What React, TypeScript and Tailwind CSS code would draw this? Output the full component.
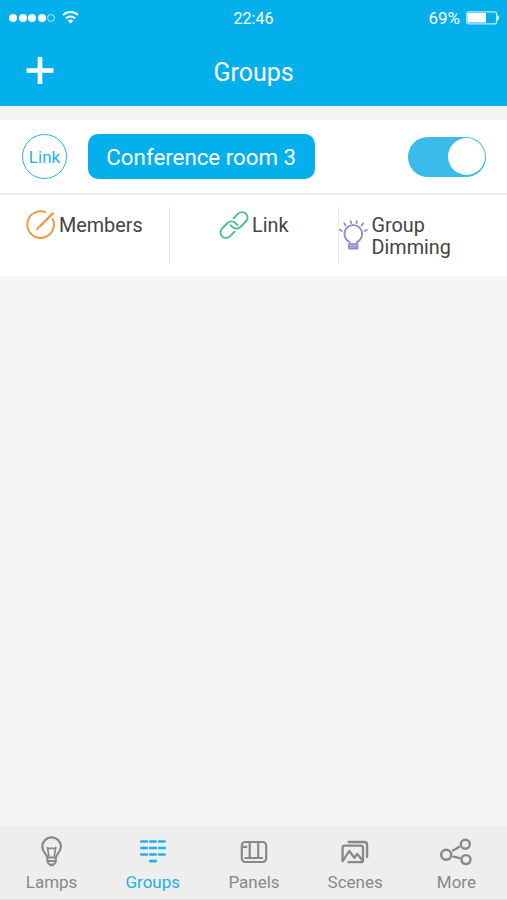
import { ReactNode, useState } from "react";
import clsx from "clsx";

function LampIcon() {
  return (
    <svg width="24" height="32" viewBox="0 0 24 32" fill="none" stroke="currentColor" strokeWidth="2.2" strokeLinejoin="round">
      <path d="M7.2 21.5C7.2 18.500 2.300 16 2.300 10.700a9.300 9.300 0 0 1 18.600 0c0 5.300-4.900 7.800-4.900 10.800z" />
      <path d="M9 20.500 7.400 11.600l2.300 1.200 1.900-.8 1.900.8 2.300-1.200L14.200 20.500" strokeWidth="1.6" />
      <path d="M7.400 22v4l2 2.500h4.400l2-2.500V22M7.600 25h8" strokeWidth="2" />
      <path d="M9.600 29.200h4" />
    </svg>
  );
}

function GroupsIcon() {
  return (
    <svg width="28" height="32" viewBox="0 0 28 32" fill="none" stroke="currentColor" strokeWidth="2.6" strokeLinecap="round">
      <path d="M2.300 5.500h5.600M11.200 5.500h5.600M20.100 5.500h5.600M2.300 12h5.600M11.200 12h5.600M20.100 12h5.600M2.300 18.500h5.600M11.200 18.500h5.600M20.100 18.500h5.600M11.200 25.100h5.600" />
    </svg>
  );
}

function PanelsIcon() {
  return (
    <svg width="28" height="32" viewBox="0 0 28 32" fill="none" stroke="currentColor" strokeWidth="2.2">
      <rect x="1.8" y="6" width="24.4" height="20" rx="3.5" />
      <path d="M9.700 6v15.500M18.200 6v15.500M4.500 22h18.500M3 10.800h4.200" />
    </svg>
  );
}

function ScenesIcon() {
  return (
    <svg width="30" height="32" viewBox="0 0 30 32" fill="none" stroke="currentColor" strokeWidth="2.3" strokeLinecap="round" strokeLinejoin="round">
      <path d="M2.600 25V11.700q0-2 2-2h16.200q2.200 0 2.200 2v12.500q0 2-2.200 2H8.500" />
      <path d="M8.500 6h15.600q3 0 3 3v12" />
      <path d="m2.800 25 6.400-10 5.200 6.800 2.800-3.900 5 6" />
    </svg>
  );
}

function MoreIcon() {
  return (
    <svg width="32" height="32" viewBox="0 0 32 32" fill="none" stroke="currentColor" strokeWidth="2.4">
      <circle cx="6.200" cy="18.800" r="5" />
      <circle cx="25.300" cy="8.300" r="4.500" />
      <circle cx="26" cy="23.600" r="4.500" />
      <path d="m13 14.500 6-3.500M13.500 20.700l6 1.400" strokeLinecap="round" />
    </svg>
  );
}

function MembersIcon() {
  return (
    <svg width="30" height="30" viewBox="0 0 30 30" fill="none" stroke="#f2994a" strokeWidth="2" strokeLinecap="round">
      <path d="M19.300 2.100A13.300 13.300 0 1 0 26.700 9" />
      <path d="M26.800 3.300 14.300 15.800" strokeWidth="2.5" />
      <path d="m12.900 17.100-1.700 2.100" />
    </svg>
  );
}

function ChainIcon() {
  return (
    <svg width="30" height="30" viewBox="0 0 30 30" fill="none" stroke="#50bd8d" strokeWidth="1.9" strokeLinecap="round">
      <path d="m14.500 8.300 4.600-4.600a5.500 5.500 0 0 1 7.800 7.800l-5.500 5.500a5.500 5.500 0 0 1-7.800 0l-2.200-1.900" />
      <path d="m15.500 21.700-4.600 4.600a5.500 5.500 0 0 1-7.800-7.800l5.500-5.500a5.500 5.500 0 0 1 7.800 0l2 2.100" />
    </svg>
  );
}

function DimmingIcon() {
  return (
    <svg width="30" height="32" viewBox="0 0 30 32" fill="none" stroke="#9a88cc" strokeWidth="1.8" strokeLinecap="round">
      <path d="M10.800 23.700v-1.600a9 9 0 1 1 7.400 0v1.600" />
      <path d="M10.200 24.300h8.600v4.400h-8.600zM11.300 26.500h6.400" strokeLinejoin="round" />
      <path d="m3 11-2.300-1.300M6.700 5.300 5.400 3M12.400 2.900 12 .9M17.700 2.900l.4-2M23 5.300l1.500-2.300M26 11l2.300-1.300" />
    </svg>
  );
}

const tabs = [
  { name: "Lamps", icon: <LampIcon /> },
  { name: "Groups", icon: <GroupsIcon /> },
  { name: "Panels", icon: <PanelsIcon /> },
  { name: "Scenes", icon: <ScenesIcon /> },
  { name: "More", icon: <MoreIcon /> },
];

function StatusBar() {
  return (
    <div className="grid h-9 grid-cols-3 items-center pl-[9px] pr-[8px] text-base leading-none">
      <div className="flex items-center gap-[1.5px]">
        {[0, 1, 2, 3].map((i) => (
          <span key={i} className="size-2 rounded-full bg-white" />
        ))}
        <span className="size-2 rounded-full border border-white/70" />
        <svg className="ml-[5px]" width="17" height="14" viewBox="0 0 17 14" fill="none" stroke="white" strokeWidth="1.9">
          <path d="M1 4.100a10.800 10.800 0 0 1 15 0M3.800 7.400a6.800 6.800 0 0 1 9.400 0" />
          <path d="m8.500 12.500-2.700-2.700a4 4 0 0 1 5.400 0z" fill="white" stroke="none" />
        </svg>
      </div>
      <span className="-ml-px pt-px text-center">22:46</span>
      <div className="flex items-center justify-end gap-[6px]">
        <span className="pt-px text-[17px]">69%</span>
        <svg width="33" height="14" viewBox="0 0 33 14" fill="none">
          <rect x=".8" y=".8" width="29.9" height="12" rx="1.8" stroke="white" strokeOpacity=".75" strokeWidth="1.3" />
          <path d="M1.500 2h18.500v9.500H1.500z" fill="white" />
          <path d="M31.200 4.300q2 .5 2 2.500t-2 2.500z" fill="white" />
        </svg>
      </div>
    </div>
  );
}

function Action({ icon, label, className }: { icon: ReactNode; label: string; className?: string }) {
  return (
    <button className={clsx("flex gap-[3px] text-left leading-[23px] text-[#444]", className)}>
      {icon}
      <span>{label}</span>
    </button>
  );
}

function GroupCard() {
  const [on, setOn] = useState(true);

  return (
    <section className="bg-white">
      <div className="flex h-[75px] items-center border-b-2 border-[#eee] pl-[22px] pr-[21px]">
        <button className="size-[45px] rounded-full border-[1.5px] border-[#25b3e9] pt-0.5 text-[17px] text-[#25b3e9]">
          Link
        </button>
        <div className="ml-[21px] flex h-[45px] w-[226.5px] items-center justify-center rounded-[10px] bg-[#03b0ec] pt-[3px] text-[22.3px] text-white">
          Conference room 3
        </div>
        <button
          onClick={() => setOn(!on)}
          className={clsx(
            "ml-auto flex h-10 w-[78px] items-center rounded-full px-[1.5px]",
            on ? "justify-end bg-[#3abbe9]" : "bg-gray-300"
          )}
        >
          <span className="size-[37px] rounded-full bg-white" />
        </button>
      </div>
      {/* Group actions */}
      <div className="grid h-[81px] grid-cols-[170px_169px_1fr] py-3 text-[19.8px]">
        <Action icon={<MembersIcon />} label="Members" className="items-start border-r border-[#e8e8e8] pl-[26px] pt-[3px] [&>span]:pt-1" />
        <Action icon={<ChainIcon />} label="Link" className="items-start border-r border-[#e8e8e8] pl-[49px] pt-[3px] [&>span]:pt-1" />
        <Action icon={<DimmingIcon />} label="Group Dimming" className="items-center pt-px [&>span]:pt-0.5 [&>span]:leading-[22.5px]" />
      </div>
    </section>
  );
}

function TabBar({ active }: { active: string }) {
  return (
    <nav className="grid h-[74px] grid-cols-5 border-b border-[#ddd] bg-[#eee] pl-px">
      {tabs.map((tab) => (
        <button
          key={tab.name}
          className={clsx(
            "flex flex-col items-center pt-[10px] text-[17px] leading-5",
            tab.name === active ? "text-[#22b0e5]" : "text-[#888]"
          )}
        >
          {tab.icon}
          <span className="mt-1">{tab.name}</span>
        </button>
      ))}
    </nav>
  );
}

export default function App() {
  return (
    <div className="flex h-[900px] w-[507px] flex-col bg-[#f5f5f5] font-['Roboto',sans-serif]">
      <header className="h-[106px] bg-[#03b0ec] text-white">
        <StatusBar />
        <div className="grid h-[70px] grid-cols-3 items-center">
          <button className="ml-[26px]">
            <svg width="28" height="28" viewBox="0 0 28 28" stroke="white" strokeWidth="4.6">
              <path d="M.5 13.500h27M14 0v27" />
            </svg>
          </button>
          <h1 className="pt-[3px] text-center text-[25px]">Groups</h1>
        </div>
      </header>
      <main className="flex-1 pt-[14px]">
        <GroupCard />
      </main>
      <TabBar active="Groups" />
    </div>
  );
}
